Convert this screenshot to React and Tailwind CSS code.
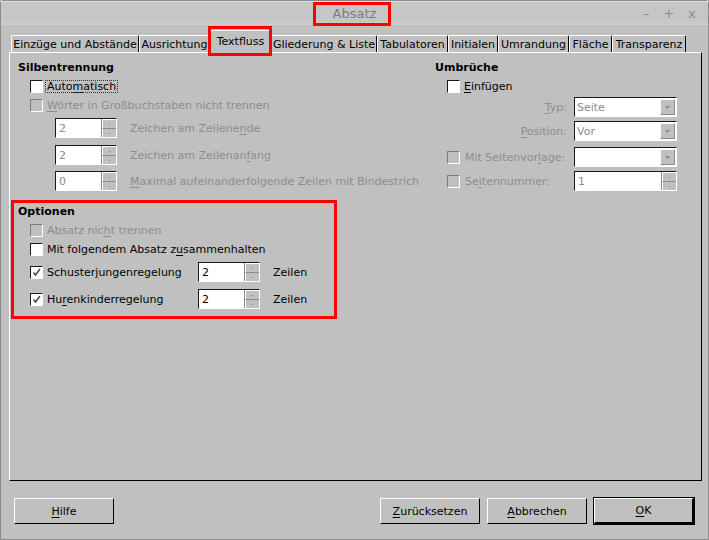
import React from 'react'

const DIS = 'text-[#8c8c8c]'

const U = ({ children }) => <span className="underline underline-offset-[2px]">{children}</span>

const Check = ({ checked, disabled }) => (
  <span
    className={`relative block w-[13px] h-[13px] shrink-0 border-t border-l border-r border-b border-r-white border-b-white ${
      disabled ? 'bg-[#c0c0c0] border-t-[#7a7a7a] border-l-[#7a7a7a]' : 'bg-white border-t-[#1a1a1a] border-l-[#1a1a1a]'
    }`}
  >
    {checked && (
      <svg width="11" height="11" viewBox="0 0 11 11" className="absolute left-0 top-0">
        <path d="M2.5 5.5 L4.5 8 L9 2" fill="none" stroke="#404040" strokeWidth="1.4" />
      </svg>
    )}
  </span>
)

// small up/down buttons on the right of a spin field
const SpinButtons = () => (
  <div className="flex flex-col w-[15px] h-full bg-[#c0c0c0] border-l border-[#8a8a8a]">
    <div className="flex-1 flex items-center justify-center border-t border-l border-white border-b border-b-[#8a8a8a]">
      <span className="block w-[1px] h-[1px] bg-[#777]" />
    </div>
    <div className="flex-1 flex items-center justify-center border-l border-white">
      <span className="block w-[1px] h-[1px] bg-[#777]" />
    </div>
  </div>
)

const Spin = ({ value, disabled, w = 'w-[62px]' }) => (
  <div className={`${w} h-[20px] flex shrink-0 bg-white border-t border-l border-[#1a1a1a] border-r border-b border-r-white border-b-white`}>
    <div className={`flex-1 flex items-center pl-[3px] ${disabled ? DIS : 'text-black'}`}>{value}</div>
    <SpinButtons />
  </div>
)

const Select = ({ value }) => (
  <div className="w-[103px] h-[20px] flex shrink-0 bg-white border-t border-l border-[#1a1a1a] border-r border-b border-r-white border-b-white">
    <div className={`flex-1 flex items-center pl-[2px] ${DIS}`}>{value}</div>
    <div className="w-[15px] my-[1px] mr-[1px] flex items-center justify-center bg-[#c0c0c0] border-t border-l border-white border-r border-b border-r-[#8a8a8a] border-b-[#8a8a8a]">
      <svg width="5" height="3" viewBox="0 0 5 3">
        <path d="M0 0 H5 L2.5 3 Z" fill="#8a8a8a" />
      </svg>
    </div>
  </div>
)

const Btn = ({ children, primary }) => (
  <div
    className={`w-[100px] h-[26px] flex items-center justify-center text-black ${
      primary
        ? 'border-t border-l border-white border-r-2 border-b-2 border-r-black border-b-black outline outline-1 outline-black'
        : 'border-t border-l border-white border-r border-b border-r-black border-b-black'
    }`}
  >
    {children}
  </div>
)

const tabs = [
  ['Einzüge und Abstände', 'w-[128px]'],
  ['Ausrichtung', 'w-[71px]'],
  ['Textfluss', 'w-[61px]', true],
  ['Gliederung & Liste', 'w-[106px]'],
  ['Tabulatoren', 'w-[71px]'],
  ['Initialen', 'w-[50px]'],
  ['Umrandung', 'w-[71px]'],
  ['Fläche', 'w-[43px]'],
  ['Transparenz', 'w-[74px]'],
]

const CheckRow = ({ checked, disabled, children, cls = 'mt-[1px]', focus }) => (
  <div className={`h-[18px] flex items-center pl-[12px] gap-[4px] ${cls}`}>
    <Check checked={checked} disabled={disabled} />
    <span className={`${disabled ? DIS : 'text-black'} ${focus ? 'outline outline-1 outline-dotted outline-[#333] px-[1px] -ml-[1px]' : ''}`}>
      {children}
    </span>
  </div>
)

export default function App() {
  return (
    <div className="relative w-[709px] h-[540px] bg-[#c0c0c0] font-['DejaVu_Sans',sans-serif] text-[11px] leading-none text-black overflow-hidden">
      <div className="h-full flex flex-col border-l border-r border-b border-[#8a8a8a] rounded-t-[3px] border-t">
        {/* title bar */}
        <div className="relative h-[24px] shrink-0 bg-[#c6c6c6] border-t border-dotted border-t-white">
          <div className="absolute inset-x-0 bottom-0 h-[3px] border-t border-b border-dotted border-[#d6d6d6]" />
          <div className="h-full flex items-center justify-center text-[13px] text-[#7c7c7c]">Absatz</div>
          <div className="absolute right-[12px] top-0 h-full flex items-center gap-[14px] text-[13px] text-[#8c8c8c]">
            <span>–</span>
            <span>+</span>
            <span>x</span>
          </div>
        </div>

        <div className="flex-1 flex flex-col pl-[8px] pr-[6px]">
          {/* tabs */}
          <div className="mt-[5px] h-[22px] flex items-end pl-[2px] relative z-10">
            {tabs.map(([label, w, sel]) => (
              <div
                key={label}
                className={`${w} shrink-0 flex items-center justify-center border-t border-l border-white border-r border-r-black rounded-t-[2px] bg-[#c0c0c0] ${
                  sel ? 'h-[23px] -mb-[1px] pb-[1px]' : 'h-[17px]'
                }`}
              >
                {label}
              </div>
            ))}
          </div>

          {/* panel */}
          <div className="h-[429px] flex border-t border-l border-white border-r border-b border-r-black border-b-black pl-[8px]">
            <div className="w-[417px] shrink-0 flex flex-col">
              <div className="mt-[6px] h-[16px] flex items-center font-bold">Silbentrennung</div>
              <CheckRow cls="mt-[2px]" focus>
                Auto<U>m</U>atisch
              </CheckRow>
              <CheckRow disabled>
                <U>W</U>örter in Großbuchstaben nicht trennen
              </CheckRow>
              <div className="mt-[4px] h-[20px] flex items-center pl-[37px] gap-[13px]">
                <Spin value="2" disabled />
                <span className={DIS}>
                  Zeichen am Zeilene<U>n</U>de
                </span>
              </div>
              <div className="mt-[7px] h-[20px] flex items-center pl-[37px] gap-[13px]">
                <Spin value="2" disabled />
                <span className={DIS}>
                  Zeichen am Zeilenan<U>f</U>ang
                </span>
              </div>
              <div className="mt-[6px] h-[20px] flex items-center pl-[37px] gap-[13px]">
                <Spin value="0" disabled />
                <span className={`${DIS} whitespace-nowrap`}>
                  <U>M</U>aximal aufeinanderfolgende Zeilen mit Bindestrich
                </span>
              </div>

              <div className="mt-[12px] h-[16px] flex items-center font-bold">Optionen</div>
              <CheckRow cls="mt-[2px]" disabled>
                Absatz nic<U>h</U>t trennen
              </CheckRow>
              <CheckRow>
                Mit folgendem Absatz z<U>u</U>sammenhalten
              </CheckRow>
              <div className="mt-[4px] h-[20px] flex items-center pl-[12px]">
                <div className="w-[168px] flex items-center gap-[4px]">
                  <Check checked />
                  <span>
                    Schuster<U>j</U>ungenregelung
                  </span>
                </div>
                <Spin value="2" />
                <span className="ml-[13px]">Zeilen</span>
              </div>
              <div className="mt-[7px] h-[20px] flex items-center pl-[12px]">
                <div className="w-[168px] flex items-center gap-[4px]">
                  <Check checked />
                  <span>
                    Hu<U>r</U>enkinderregelung
                  </span>
                </div>
                <Spin value="2" />
                <span className="ml-[13px]">Zeilen</span>
              </div>
            </div>

            <div className="w-[243px] shrink-0 flex flex-col">
              <div className="mt-[6px] h-[16px] flex items-center font-bold">Umbrüche</div>
              <CheckRow cls="mt-[2px]">
                <U>E</U>infügen
              </CheckRow>
              <div className="mt-[2px] h-[20px] flex items-center">
                <div className={`w-[139px] text-right pr-[7px] ${DIS}`}>
                  <U>T</U>yp:
                </div>
                <Select value="Seite" />
              </div>
              <div className="mt-[4px] h-[20px] flex items-center">
                <div className={`w-[139px] text-right pr-[7px] ${DIS}`}>
                  <U>P</U>osition:
                </div>
                <Select value="Vor" />
              </div>
              <div className="mt-[6px] h-[20px] flex items-center">
                <div className="w-[139px] flex items-center gap-[5px] pl-[12px]">
                  <Check disabled />
                  <span className={DIS}>
                    Mit Seitenvor<U>l</U>age:
                  </span>
                </div>
                <Select value="" />
              </div>
              <div className="mt-[4px] h-[20px] flex items-center">
                <div className="w-[139px] flex items-center gap-[5px] pl-[12px]">
                  <Check disabled />
                  <span className={DIS}>
                    Se<U>i</U>tennummer:
                  </span>
                </div>
                <Spin value="1" disabled w="w-[103px]" />
              </div>
            </div>
          </div>

          {/* buttons */}
          <div className="mt-[17px] flex items-center pl-[5px] pr-[8px]">
            <Btn>
              <U>H</U>ilfe
            </Btn>
            <div className="flex-1" />
            <div className="flex gap-[7px]">
              <Btn>
                <U>Z</U>urücksetzen
              </Btn>
              <Btn>
                <U>A</U>bbrechen
              </Btn>
              <Btn primary>
                <U>O</U>K
              </Btn>
            </div>
          </div>
        </div>
      </div>

      {/* red annotation boxes */}
      <div className="absolute left-[313px] top-[2px] w-[78px] h-[24px] border-[3px] border-[#ff0000] pointer-events-none" />
      <div className="absolute left-[208px] top-[26px] w-[64px] h-[30px] border-[3px] border-[#ff0000] pointer-events-none z-20" />
      <div className="absolute left-[11px] top-[200px] w-[326px] h-[119px] border-[3px] border-[#ff0000] pointer-events-none" />
    </div>
  )
}
